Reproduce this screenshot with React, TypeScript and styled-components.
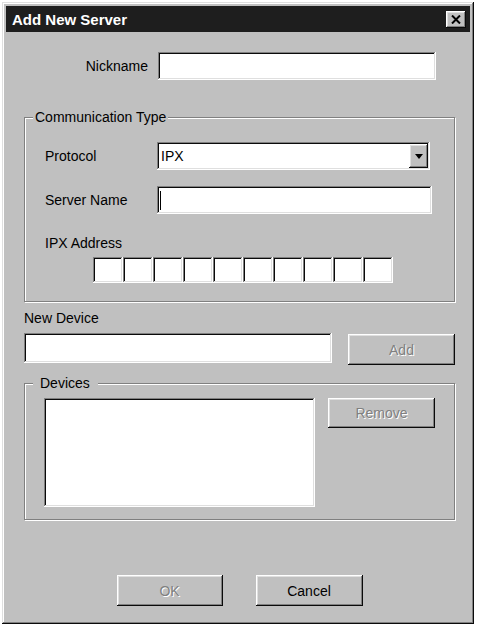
import React from 'react';
import styled, { createGlobalStyle, css } from 'styled-components';

const GlobalStyle = createGlobalStyle`
    html, body {
        margin: 0;
        padding: 0;
        background: #ffffff;
    }
    body {
        font-family: "Liberation Sans", Arial, sans-serif;
        font-size: 14px;
        color: #000000;
    }
`;

const raised = css`
    box-shadow: inset -1px -1px #0a0a0a, inset 1px 1px #ffffff,
        inset -2px -2px #808080, inset 2px 2px #dfdfdf;
`;

const sunken = css`
    box-shadow: inset -1px -1px #ffffff, inset 1px 1px #808080,
        inset -2px -2px #dfdfdf, inset 2px 2px #0a0a0a;
`;

const Window = styled.div`
    box-sizing: border-box;
    margin: 2px 0 0 2px;
    width: 472px;
    height: 622px;
    padding: 4px;
    background: #c0c0c0;
    box-shadow: inset -1px -1px #0a0a0a, inset 1px 1px #dfdfdf,
        inset -2px -2px #808080, inset 2px 2px #ffffff;
    display: flex;
    flex-direction: column;
`;

const TitleBar = styled.div`
    height: 26px;
    background: #1e1e1e;
    display: flex;
    align-items: center;
    justify-content: space-between;
    padding: 0 4px 0 6px;
    color: #ffffff;
    font-weight: bold;
    font-size: 15px;
`;

const CloseButton = styled.button`
    box-sizing: border-box;
    width: 20px;
    height: 17px;
    padding: 0;
    border: 0;
    background: #c0c0c0;
    display: flex;
    align-items: center;
    justify-content: center;
    ${raised}
`;

const Body = styled.div`
    display: flex;
    flex-direction: column;
    padding: 0 15px 0 18px;
`;

const Row = styled.div<{ $top?: number; $gap?: number; $align?: string }>`
    display: flex;
    align-items: ${(p) => p.$align || 'center'};
    gap: ${(p) => p.$gap ?? 0}px;
    margin-top: ${(p) => p.$top ?? 0}px;
`;

const Label = styled.div<{ $w?: number; $right?: boolean; $top?: number }>`
    width: ${(p) => (p.$w ? `${p.$w}px` : 'auto')};
    text-align: ${(p) => (p.$right ? 'right' : 'left')};
    line-height: 16px;
    margin-top: ${(p) => p.$top ?? 0}px;
    white-space: nowrap;
`;

const Field = styled.div<{ $w: number; $h: number }>`
    box-sizing: border-box;
    position: relative;
    width: ${(p) => p.$w}px;
    height: ${(p) => p.$h}px;
    background: #ffffff;
    display: flex;
    align-items: center;
    padding: 0 4px;
    ${sunken}
`;

const Caret = styled.span`
    display: block;
    width: 1px;
    height: 19px;
    background: #000000;
    margin-left: -1px;
`;

const SelectText = styled.span`
    flex: 1;
`;

const DropButton = styled.div`
    box-sizing: border-box;
    width: 19px;
    height: 24px;
    margin-right: -2px;
    background: #c0c0c0;
    display: flex;
    align-items: center;
    justify-content: center;
    ${raised}
`;

const Group = styled.div<{ $top: number; $pad: string }>`
    position: relative;
    margin-top: ${(p) => p.$top}px;
    border: 1px solid #808080;
    box-shadow: inset 1px 1px #ffffff, 1px 1px #ffffff;
    padding: ${(p) => p.$pad};
    display: flex;
    flex-direction: column;
`;

const Legend = styled.span<{ $pad: string }>`
    position: absolute;
    top: -9px;
    left: 8px;
    padding: ${(p) => p.$pad};
    background: #c0c0c0;
    line-height: 16px;
`;

const IpxStrip = styled.div`
    display: flex;
    margin: 6px 0 0 48px;
`;

const IpxCell = styled.div`
    box-sizing: border-box;
    width: 30px;
    height: 26px;
    background: #ffffff;
    ${sunken}
`;

const Button = styled.button<{ $w?: number; $h?: number; $disabled?: boolean; $top?: number }>`
    box-sizing: border-box;
    width: ${(p) => p.$w ?? 107}px;
    height: ${(p) => p.$h ?? 31}px;
    margin-top: ${(p) => p.$top ?? 0}px;
    padding: 0;
    border: 0;
    background: #c0c0c0;
    font-family: inherit;
    font-size: 14px;
    color: ${(p) => (p.$disabled ? '#808080' : '#000000')};
    text-shadow: ${(p) => (p.$disabled ? '1px 1px 0 #ffffff' : 'none')};
    flex-shrink: 0;
    ${raised}
`;

const ListBox = styled.div`
    box-sizing: border-box;
    width: 271px;
    height: 109px;
    background: #ffffff;
    ${sunken}
`;

const Footer = styled.div`
    display: flex;
    justify-content: center;
    gap: 33px;
    margin-top: 55px;
`;

const App: React.FC = () => {
    return (
        <>
            <GlobalStyle />
            <Window>
                <TitleBar>
                    <span>Add New Server</span>
                    <CloseButton aria-label="Close">
                        <svg width="10" height="9" viewBox="0 0 10 9">
                            <path d="M1 0.5 L9 8.5 M9 0.5 L1 8.5" stroke="#000" strokeWidth="2" />
                        </svg>
                    </CloseButton>
                </TitleBar>
                <Body>
                    <Row $top={20} $gap={10}>
                        <Label $w={124} $right>
                            Nickname
                        </Label>
                        <Field $w={278} $h={28} />
                    </Row>

                    <Group $top={37} $pad="24px 0 18px 20px">
                        <Legend $pad="0 2px">Communication Type</Legend>
                        <Row>
                            <Label $w={112}>Protocol</Label>
                            <Field $w={273} $h={28}>
                                <SelectText>IPX</SelectText>
                                <DropButton>
                                    <svg width="8" height="5" viewBox="0 0 8 5">
                                        <path d="M0 0 H8 L4 5 Z" fill="#000" />
                                    </svg>
                                </DropButton>
                            </Field>
                        </Row>
                        <Row $top={16}>
                            <Label $w={112}>Server Name</Label>
                            <Field $w={275} $h={28}>
                                <Caret />
                            </Field>
                        </Row>
                        <Label $top={21}>IPX Address</Label>
                        <IpxStrip>
                            {Array.from({ length: 10 }).map((_, i) => (
                                <IpxCell key={i} />
                            ))}
                        </IpxStrip>
                    </Group>

                    <Label $top={8}>New Device</Label>
                    <Row $top={7} $gap={16} $align="flex-start">
                        <Field $w={309} $h={30} />
                        <Button $disabled $top={1}>
                            Add
                        </Button>
                    </Row>

                    <Group $top={18} $pad="14px 0 12px 19px">
                        <Legend $pad="0 8px 0 7px">Devices</Legend>
                        <Row $gap={13} $align="flex-start">
                            <ListBox />
                            <Button $disabled $h={30}>
                                Remove
                            </Button>
                        </Row>
                    </Group>

                    <Footer>
                        <Button $w={106} $disabled>
                            OK
                        </Button>
                        <Button $w={107}>Cancel</Button>
                    </Footer>
                </Body>
            </Window>
        </>
    );
};

export default App;
